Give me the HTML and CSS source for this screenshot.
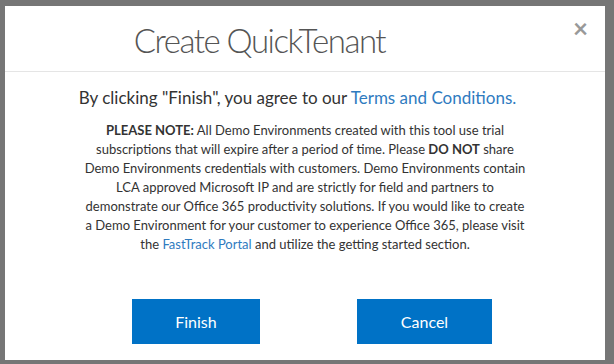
FILE: index.html
```html
<!DOCTYPE html>
<html>
<head>
    <title>Create QuickTenant</title>
    <link rel="stylesheet" href="styles.css">
</head>
<body>
    <div class="modal">
        <div class="modal-header">
            <h1 class="modal-title">Create QuickTenant</h1>
            <span class="close">&times;</span>
        </div>
        <div class="modal-body">
            <p class="agree">By clicking "Finish", you agree to our <a href="#">Terms and Conditions.</a></p>
            <p class="note">
                <b>PLEASE NOTE:</b> All Demo Environments created with this tool use trial<br>
                subscriptions that will expire after a period of time. Please <b>DO NOT</b> share<br>
                Demo Environments credentials with customers. Demo Environments contain<br>
                LCA approved Microsoft IP and are strictly for field and partners to<br>
                demonstrate our Office 365 productivity solutions. If you would like to create<br>
                a Demo Environment for your customer to experience Office 365, please visit<br>
                the <a href="#">FastTrack Portal</a> and utilize the getting started section.
            </p>
        </div>
        <div class="modal-footer">
            <button class="btn btn-finish">Finish</button>
            <button class="btn btn-cancel">Cancel</button>
        </div>
    </div>
</body>
</html>
```

FILE: styles.css
```css
html, body {
    height: 100%;
}

body {
    margin: 0;
    padding: 6px 9px 4px 5px;
    box-sizing: border-box;
    background-color: #767676;
    font-family: Lato, sans-serif;
    color: #333;
}

.modal {
    background-color: white;
    height: 100%;
    display: flex;
    flex-direction: column;
}

.modal-header {
    position: relative;
    height: 65px;
    border-bottom: 1px solid #e5e5e5;
}

.modal-title {
    margin: 0;
    padding: 14px 91px 0 0;
    text-align: center;
    font-size: 33px;
    font-weight: 300;
    letter-spacing: -1.5px;
    color: #555;
    line-height: 40px;
}

.close {
    position: absolute;
    top: 9px;
    right: 17px;
    font-size: 26px;
    font-weight: bold;
    color: #999;
    line-height: 26px;
}

.modal-body {
    padding: 16px 0 0;
    text-align: center;
}

a {
    color: #2f7bbf;
    text-decoration: none;
}

.agree {
    margin: 0 15px 0 0;
    font-size: 17px;
    line-height: 20px;
}

.note {
    margin: 13px 0 0;
    font-size: 13px;
    line-height: 19px;
}

.note b {
    font-weight: bold;
}

.modal-footer {
    display: flex;
    gap: 97px;
    padding: 45px 0 0 127px;
}

.btn {
    height: 45px;
    border: none;
    background-color: #0072c6;
    color: white;
    font-family: Lato, sans-serif;
    font-size: 16px;
}

.btn-finish {
    width: 128px;
}

.btn-cancel {
    width: 135px;
}
```
